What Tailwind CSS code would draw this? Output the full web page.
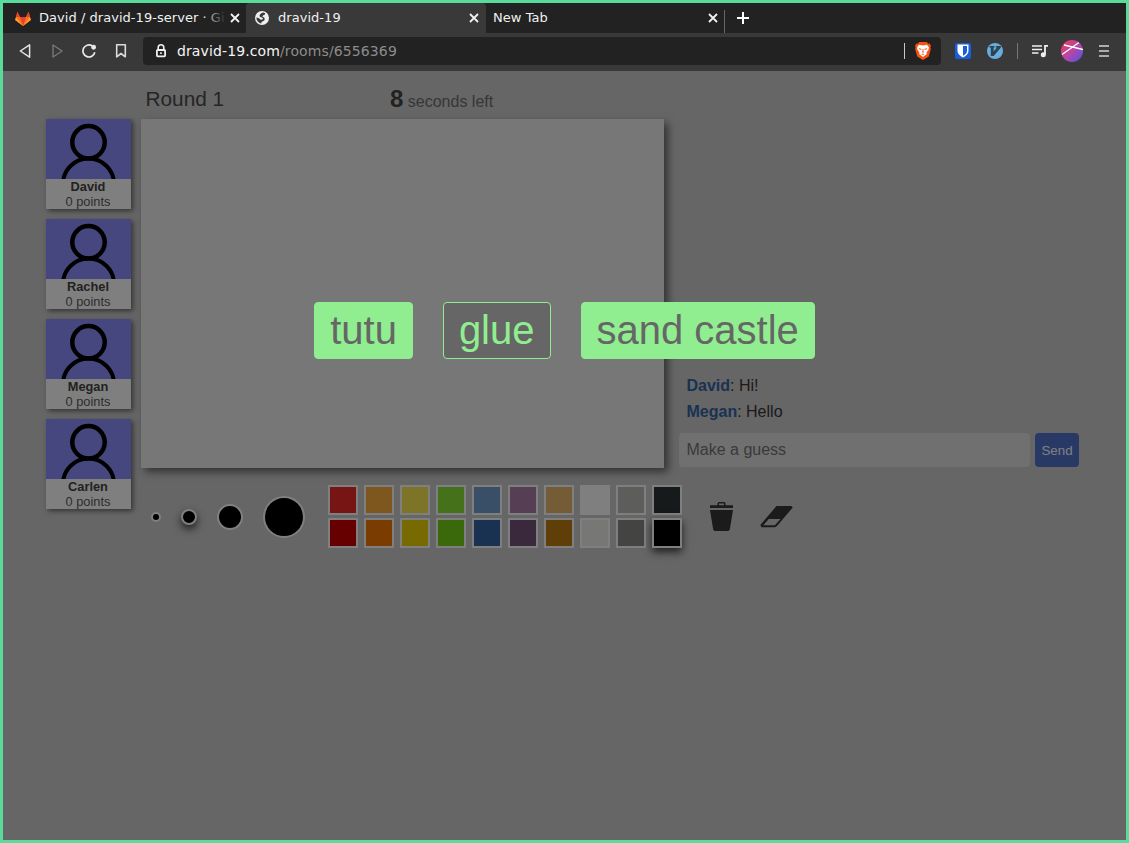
<!DOCTYPE html>
<html lang="en">
<head>
<meta charset="utf-8">
<title>dravid-19</title>
<script src="https://cdn.jsdelivr.net/npm/@tailwindcss/browser@4"></script>
</head>
<body class="font-['Liberation_Sans',sans-serif]">
<svg width="0" height="0" class="hidden">
  <symbol id="close" viewBox="0 0 10 10"><path d="M1 1l8 8M9 1l-8 8" stroke="#f2f2f2" stroke-width="1.8" fill="none"/></symbol>
  <symbol id="person" viewBox="0 0 85 60"><g fill="none" stroke="#000"><circle cx="42.5" cy="23.3" r="16.2" stroke-width="4.5"/><circle cx="42.5" cy="65" r="25.5" stroke-width="4"/></g></symbol>
</svg>
<div class="flex h-[843px] w-[1129px] flex-col overflow-hidden border-3 border-[#58db9b] bg-[#ccc]">
  <!-- Tab strip -->
  <div class="flex h-[30px] shrink-0 bg-[#222] font-['DejaVu_Sans',sans-serif] text-[13px] tracking-[0.04px] text-[#f0f0f0]">
    <div class="flex w-[243px] items-center pl-3">
      <svg class="h-[15px] w-4 shrink-0" viewBox="0 0 16 15"><path d="M8 15L.2 9.1 2.4.8 5 6h6L13.6.8 15.8 9.1z" fill="#fc6d26"/><path d="M2.4.8L5 6H1zM13.6.8L11 6h4zM5 6h6l-3 9z" fill="#e24329"/><path d="M.2 9.1L1 6l7 9zM15.8 9.1L15 6l-7 9z" fill="#fca326"/></svg>
      <div class="relative ml-2 w-[183px] whitespace-nowrap">David / dravid-19-server · Gi<span class="absolute inset-y-0 -right-1 w-6 bg-linear-to-r from-transparent to-[#222]"></span></div>
      <svg class="ml-[8px] size-[10px]"><use href="#close"/></svg>
    </div>
    <div class="flex w-[240px] items-center rounded-t bg-[#393939] pl-[9px]">
      <svg class="size-[14px]" viewBox="0 0 14 14"><circle cx="7" cy="7" r="7" fill="#efefef"/><path d="M8.200 1.500C6 2 4.300 3.600 4.600 5.200c.3 1.300 2 1 2.900 1.600.8.600.3 1.600-.7 1.900l-1.400-.2L3.600 7 1.400 6.600C1.300 9.600 3.400 12 6.300 12.500l.2-1.500 2.300-1.200c1.300-1 1.100-2.700 0-3.500L7.300 5.500l.9-1.200 1.600-.5.4-1.500z" fill="#393939"/></svg>
      <span class="ml-[9px] flex-1">dravid-19</span>
      <svg class="mr-[7px] size-[10px]"><use href="#close"/></svg>
    </div>
    <div class="flex w-[239px] items-center pl-[7px]">
      <span class="flex-1">New Tab</span>
      <svg class="mr-[6px] size-[10px]"><use href="#close"/></svg>
      <span class="mt-[7px] h-[23px] w-px bg-[#666]"></span>
    </div>
    <svg class="mt-[9px] ml-3 size-3" viewBox="0 0 12 12"><path d="M6 0v12M0 6h12" stroke="#fff" stroke-width="2"/></svg>
  </div>
  <!-- Toolbar -->
  <div class="flex h-[38px] shrink-0 items-center bg-[#393939] pb-0.5 font-['DejaVu_Sans',sans-serif] text-sm">
    <svg class="ml-4 h-4 w-3" viewBox="0 0 12 16" fill="none" stroke="#e4e4e4" stroke-width="1.5" stroke-linejoin="round"><path d="M10.600 1.800v12.400L1.300 8z"/></svg>
    <svg class="ml-[21px] h-4 w-3" viewBox="0 0 12 16" fill="none" stroke="#777" stroke-width="1.4" stroke-linejoin="round"><path d="M1 2v12L10 8z"/></svg>
    <svg class="ml-[17px] size-4" viewBox="0 0 16 16" fill="none" stroke="#eaeaea" stroke-width="1.7"><path d="M11 2.800A6 6 0 1 0 13.800 9.300"/><circle cx="12.600" cy="4.300" r="1.600" fill="#eaeaea"/></svg>
    <svg class="ml-[18px] h-4 w-3" viewBox="0 0 12 16" fill="none" stroke="#dcdcdc" stroke-width="1.6" stroke-linejoin="round"><path d="M1.700 1.800h8.600v12L6 10.500l-4.300 3.300z"/></svg>
    <div class="ml-4 flex h-7 w-[798px] items-center rounded bg-[#222] pl-[13px] text-[#f5f5f5]">
      <svg class="h-[14px] w-[10px]" viewBox="0 0 10 14"><path d="M2.200 6V3.600a2.800 2.800 0 0 1 5.600 0V6" fill="none" stroke="#efefef" stroke-width="1.600"/><rect x=".9" y="6" width="8.200" height="6.300" rx=".8" fill="none" stroke="#efefef" stroke-width="1.800"/><path d="M4.200 8.300h1.600v1.700H4.200z" fill="#efefef"/></svg>
      <span class="ml-[11px] flex-1 tracking-[0.115px]">dravid-19.com<span class="text-[#8c8c8c]">/rooms/6556369</span></span>
      <span class="h-4 w-px bg-[#c8c8c8]"></span>
      <svg class="mr-[10px] ml-[10px] h-[18px] w-4" viewBox="0 0 16 18"><path d="M4.300 0h7.400l1.600 1.700 1.400-.1 1.200 2.200-.5 1.600.4 1.500-2 7.600L8 18l-5.800-3.500L.2 6.900l.4-1.500L.1 3.800l1.200-2.200 1.400.1z" fill="#fb5013"/><path d="M4 2.800l4 .6 4-.6 2 2.700-.5 2.300-2 2.600.4 1.600L8 15l-3.900-3 .4-1.600-2-2.600L2 5.500z" fill="#fff"/><path d="M3.800 6.100l2.900.8-.6 1.200-2-.8zM12.200 6.100l-2.900.8.6 1.200 2-.8zM7.500 7h1v2.300l.9.700L8 10.800 6.600 10l.9-.7zM6.300 12.200l1.700-.7 1.700.7L8 13z" fill="#fb6a35"/></svg>
    </div>
    <svg class="ml-[14px] size-4" viewBox="0 0 16 16"><rect width="16" height="16" rx="2" fill="#175ddc"/><path d="M2.500 1.500h11V8c0 3-2.500 5-5.500 6.500C5 13 2.500 11 2.500 8z" fill="#fff"/><path d="M8 3h4v5c0 2-1.700 3.500-4 4.700z" fill="#175ddc"/></svg>
    <svg class="ml-4 size-4" viewBox="0 0 16 16"><circle cx="8" cy="8" r="8" fill="#67ade0"/><path d="M2.500 3h5v1.500h-.9v4L10 4.500H8.900V3h5v1.500L6.700 13H3.800V4.500H2.500z" fill="#2e4350"/></svg>
    <span class="ml-[14px] h-4 w-px bg-[#777]"></span>
    <svg class="ml-[14px] h-[14px] w-4" viewBox="0 0 16 14"><path d="M0 2h10M0 5.500h10M0 9h6.500" stroke="#efefef" stroke-width="1.500"/><path d="M13 10.500V1.800h3" fill="none" stroke="#efefef" stroke-width="1.800"/><circle cx="11.300" cy="10.800" r="2.500" fill="#efefef"/></svg>
    <svg class="ml-[13px] size-[22px]" viewBox="0 0 22 22"><defs><linearGradient id="av" x1="0" y1="0" x2="1" y2="1"><stop stop-color="#f23a50"/><stop offset=".5" stop-color="#b946a4"/><stop offset="1" stop-color="#4a54ee"/></linearGradient><clipPath id="ac"><circle cx="11" cy="11" r="11"/></clipPath></defs><g clip-path="url(#ac)"><path d="M0 0h22v22H0z" fill="url(#av)"/><path d="M3 5l19 4.500M1 14.500L18 2.500" fill="none" stroke="#fff" stroke-width="1.300"/></g></svg>
    <svg class="ml-4 h-3 w-[10px]" viewBox="0 0 10 12"><path d="M0 1h10M0 6h10M0 11h10" stroke="#d4d4d4" stroke-width="1.600"/></svg>
  </div>
  <!-- Game page -->
  <main class="relative flex-1 pt-4 pl-[43px] text-[#4a4a4a]">
    <div class="flex h-8 items-start pl-[99.5px]">
      <div class="w-[244.5px] text-[20.800px] leading-6">Round 1</div>
      <div class="text-base leading-6 text-[#6e6e6e]"><b class="text-2xl leading-6 text-[#444]">8</b> seconds left</div>
    </div>
    <div class="flex">
      <div class="flex w-[85px] flex-col gap-[10px] text-center text-[12.800px] leading-[15px] text-[#5a5a5a]">
        <div class="h-[90px] bg-white shadow-[2px_2px_5px_rgba(0,0,0,0.5)]"><svg class="h-[60px] w-full bg-[#8e8eff]"><use href="#person"/></svg><div class="pr-px"><b class="block text-[#444]">David</b>0 points</div></div>
        <div class="h-[90px] bg-white shadow-[2px_2px_5px_rgba(0,0,0,0.5)]"><svg class="h-[60px] w-full bg-[#8e8eff]"><use href="#person"/></svg><div class="pr-px"><b class="block text-[#444]">Rachel</b>0 points</div></div>
        <div class="h-[90px] bg-white shadow-[2px_2px_5px_rgba(0,0,0,0.5)]"><svg class="h-[60px] w-full bg-[#8e8eff]"><use href="#person"/></svg><div class="pr-px"><b class="block text-[#444]">Megan</b>0 points</div></div>
        <div class="h-[90px] bg-white shadow-[2px_2px_5px_rgba(0,0,0,0.5)]"><svg class="h-[60px] w-full bg-[#8e8eff]"><use href="#person"/></svg><div class="pr-px"><b class="block text-[#444]">Carlen</b>0 points</div></div>
      </div>
      <div class="ml-[10px] w-[523px]">
        <div class="h-[349px] bg-[#eee] shadow-[4px_4px_8px_rgba(0,0,0,0.5)]"></div>
        <div class="mt-[17px] flex w-[660px] items-center pl-[10px]">
          <div class="flex items-center gap-5">
            <span class="size-[10px] rounded-full border-2 border-white bg-black"></span>
            <span class="size-4 rounded-full border-2 border-white bg-black shadow-[0_4px_8px_rgba(0,0,0,0.7)]"></span>
            <span class="size-[26px] rounded-full border-2 border-white bg-black"></span>
            <span class="size-[42px] rounded-full border-2 border-white bg-black"></span>
          </div>
          <div class="ml-[23px] grid grid-cols-[repeat(10,30px)] gap-x-[6px] gap-y-[3px]">
            <span class="h-[30px] border-2 border-white bg-[#ef2929]"></span>
            <span class="h-[30px] border-2 border-white bg-[#fcaf3e]"></span>
            <span class="h-[30px] border-2 border-white bg-[#fce94f]"></span>
            <span class="h-[30px] border-2 border-white bg-[#8ae234]"></span>
            <span class="h-[30px] border-2 border-white bg-[#729fcf]"></span>
            <span class="h-[30px] border-2 border-white bg-[#ad7fa8]"></span>
            <span class="h-[30px] border-2 border-white bg-[#e9b96e]"></span>
            <span class="h-[30px] border-2 border-white bg-white"></span>
            <span class="h-[30px] border-2 border-white bg-[#babdb6]"></span>
            <span class="h-[30px] border-2 border-white bg-[#2e3436]"></span>
            <span class="h-[30px] border-2 border-white bg-[#cc0000]"></span>
            <span class="h-[30px] border-2 border-white bg-[#f57900]"></span>
            <span class="h-[30px] border-2 border-white bg-[#edd400]"></span>
            <span class="h-[30px] border-2 border-white bg-[#73d216]"></span>
            <span class="h-[30px] border-2 border-white bg-[#3465a4]"></span>
            <span class="h-[30px] border-2 border-white bg-[#75507b]"></span>
            <span class="h-[30px] border-2 border-white bg-[#c17d11]"></span>
            <span class="h-[30px] border-2 border-white bg-[#eeeeec]"></span>
            <span class="h-[30px] border-2 border-white bg-[#888a85]"></span>
            <span class="h-[30px] border-2 border-white bg-black shadow-[0_4px_8px_rgba(0,0,0,0.7)]"></span>
          </div>
          <svg class="ml-7 h-[29px] w-[23px]" viewBox="0 0 23 29" fill="#363636"><path d="M0 3.200h7.500V1.200L8.500 0h6l1 1.200v2H23V6H0zM9 3.200h5V1.500H9zM0 8h23l-3.200 19.500-1.300 1.500h-14l-1.300-1.500z" fill-rule="evenodd"/></svg>
          <svg class="ml-[27px] h-[22px] w-[33px]" viewBox="0 0 33 22"><path d="M16.500 0h15l1.200 1.600L17 20 15 21.200H1.500L.3 19zM8.800 13L3.300 19.200h11.600l5.600-6.200z" fill="#363636" fill-rule="evenodd"/></svg>
        </div>
      </div>
      <div class="ml-[15px] flex h-[348px] w-[400px] flex-col justify-end text-base">
        <div class="pl-[7.5px] leading-[26px] text-[#363636]"><b class="text-[#3465a4]">David</b>: Hi!</div>
        <div class="mb-2 pl-[7.5px] leading-[26px] text-[#363636]"><b class="text-[#3465a4]">Megan</b>: Hello</div>
        <div class="flex gap-[5px]">
          <div class="flex h-[34px] w-[351px] items-center rounded bg-[#e0e0e0] pl-[7.5px] text-[#757575]">Make a guess</div>
          <div class="flex h-[34px] w-11 items-center justify-center rounded bg-[#5272cc] pt-0.5 text-[13.333px] text-white">Send</div>
        </div>
      </div>
    </div>
    <!-- Word picker over the dimmed game -->
    <div class="absolute inset-0 bg-black/50"></div>
    <div class="absolute inset-x-0 top-[231px] flex justify-center gap-[30px] text-[40px] leading-[55px]">
      <span class="rounded border border-[#90ee90] bg-[#90ee90] px-[15px] text-[#666]">tutu</span>
      <span class="rounded border border-[#90ee90] bg-[#666] px-[15px] text-[#90ee90]">glue</span>
      <span class="rounded border border-[#90ee90] bg-[#90ee90] px-[15px] text-[#666]">sand castle</span>
    </div>
  </main>
</div>
</body>
</html>
